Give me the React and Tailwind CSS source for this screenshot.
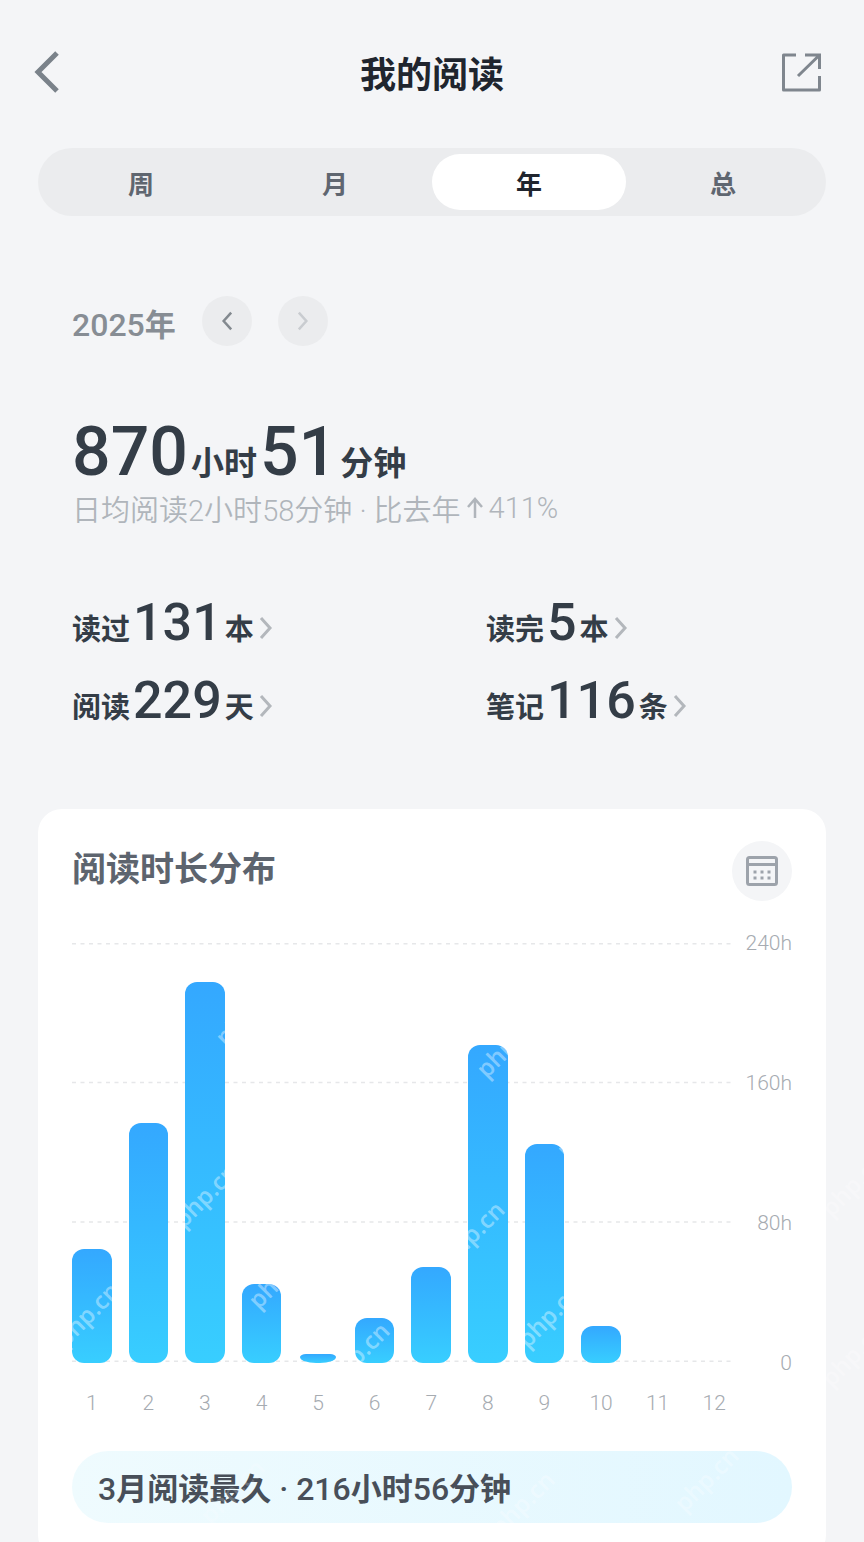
import { useState } from 'react';

const tabs = ['周', '月', '年', '总'];

const stats = [
  { label: '读过', value: 131, unit: '本' },
  { label: '读完', value: 5, unit: '本' },
  { label: '阅读', value: 229, unit: '天' },
  { label: '笔记', value: 116, unit: '条' },
];

const MAX_HOURS = 240;
const ticks = ['240h', '160h', '80h', '0'];

// marks: watermark centres, px from the bar's left and bottom edges
const months = [
  { month: 1, hours: 65, marks: [[15, 49]] },
  { month: 2, hours: 137, marks: [] },
  { month: 3, hours: 218, marks: [[20, 168], [62, 350]] },
  { month: 4, hours: 45, marks: [[38, 87]] },
  { month: 5, hours: 5, marks: [] },
  { month: 6, hours: 26, marks: [[2, 9]] },
  { month: 7, hours: 55, marks: [] },
  { month: 8, hours: 182, marks: [[40, 318], [4, 130]] },
  { month: 9, hours: 125, marks: [[24, 48], [63, 238]] },
  { month: 10, hours: 21, marks: [] },
  { month: 11, hours: 0, marks: [] },
  { month: 12, hours: 0, marks: [] },
];

function Chevron({ left = false, className }) {
  return (
    <svg viewBox="0 0 14 24" fill="none" stroke="currentColor" className={className} aria-hidden="true">
      <path d={left ? 'M12 2 3 12l9 10' : 'M2 2l9 10-9 10'} strokeWidth="3" />
    </svg>
  );
}

function Num({ children, className = '' }) {
  return <span className={`font-['Roboto',sans-serif] leading-none ${className}`}>{children}</span>;
}

function Watermark({ className, style }) {
  return (
    <span
      aria-hidden="true"
      style={style}
      className={`pointer-events-none absolute -translate-x-1/2 translate-y-1/2 -rotate-45 font-['Open_Sans',sans-serif] text-2xl leading-none font-semibold select-none ${className}`}
    >
      php.cn
    </span>
  );
}

function Header() {
  return (
    <header className="grid h-12 grid-cols-[1fr_auto_1fr] items-center px-8">
      <button type="button" aria-label="返回" className="justify-self-start text-[#7a828a]">
        <svg viewBox="0 0 30 44" fill="none" stroke="currentColor" className="h-11 w-[30px]" aria-hidden="true">
          <path d="M25 3 6 22l19 19" strokeWidth="5" />
        </svg>
      </button>
      <h1 className="text-4xl font-bold text-[#20252e]">我的阅读</h1>
      <button type="button" aria-label="分享" className="mr-2.5 justify-self-end text-[#7f868e]">
        <svg viewBox="0 0 40 40" fill="none" stroke="currentColor" strokeWidth="3" className="size-10" aria-hidden="true">
          <path d="M14 3H1.500v35h36V24" strokeLinejoin="round" />
          <path d="M23 3h14.500v14M36.500 4 16 24" />
        </svg>
      </button>
    </header>
  );
}

function Chart() {
  return (
    <div className="mt-[42px]">
      <div className="flex">
        <div className="relative h-[420px] flex-1">
          <svg className="absolute inset-0 h-full w-full" aria-hidden="true">
            {['0.2%', '33.2%', '66.4%', '99.6%'].map((y) => (
              <line key={y} x1="0" x2="100%" y1={y} y2={y} stroke="#e6e7e9" strokeWidth="1.500" strokeDasharray="4 4.500" />
            ))}
          </svg>
          <div className="relative grid h-full grid-cols-12 items-end gap-[17px]">
            {months.map(({ month, hours, marks }) => (
              <div
                key={month}
                style={{ height: `${(hours / MAX_HOURS) * 100}%` }}
                className={`relative overflow-hidden bg-linear-to-b from-[#34a8ff] to-[#38ceff] ${
                  month === 5 ? 'mx-0.5 rounded-t-[6px_3px] rounded-b-[16px_6px]' : 'rounded-xl'
                }`}
              >
                {marks.map(([left, bottom]) => (
                  <Watermark key={bottom} style={{ left, bottom }} className="text-white/40" />
                ))}
              </div>
            ))}
          </div>
        </div>
        <div className="-my-3 flex w-[58px] flex-col justify-between text-right font-['Roboto',sans-serif] text-[21px] leading-6 font-light text-[#a6abb1]">
          {ticks.map((tick) => (
            <span key={tick}>{tick}</span>
          ))}
        </div>
      </div>
      <div className="mt-7 mr-[58px] grid grid-cols-12 gap-[17px] text-center font-['Roboto',sans-serif] text-[21px] leading-6 font-light text-[#a6abb1]">
        {months.map(({ month }) => (
          <span key={month}>{month}</span>
        ))}
      </div>
    </div>
  );
}

export default function App() {
  const [active, setActive] = useState('年');

  return (
    <div className="relative min-h-screen overflow-hidden bg-[#f4f5f7] pt-12 font-['Noto_Sans_CJK_SC',sans-serif]">
      <Header />

      <main className="mt-13 px-[38px]">
        <nav className="grid grid-cols-4 rounded-full bg-[#ebecee] p-1.5">
          {tabs.map((tab) => (
            <button
              key={tab}
              type="button"
              aria-pressed={active === tab}
              onClick={() => setActive(tab)}
              className={`h-14 rounded-full text-[26px] font-bold ${
                active === tab ? 'bg-white text-[#20252e]' : 'text-[#5f6670]'
              }`}
            >
              {tab}
            </button>
          ))}
        </nav>

        <section className="mt-20 px-[34px]">
          <div className="flex items-center gap-[26px]">
            <h2 className="pt-1 text-[31px] leading-10 font-bold text-[#878d94]">
              <Num className="text-[32px] font-medium">2025</Num>年
            </h2>
            <button type="button" aria-label="上一年" className="flex size-[50px] items-center justify-center rounded-full bg-[#ebecee] text-[#83898f]">
              <Chevron left className="h-5 w-3" />
            </button>
            <button type="button" aria-label="下一年" disabled className="flex size-[50px] items-center justify-center rounded-full bg-[#ebecee] text-[#c9ccd0]">
              <Chevron className="h-5 w-3" />
            </button>
          </div>

          <p className="mt-[72px] flex items-baseline gap-[3px] text-[33px] leading-none font-bold text-[#343d47]">
            <Num className="text-[68px] font-medium">870</Num>
            <span>小时</span>
            <Num className="text-[68px] font-medium">51</Num>
            <span>分钟</span>
          </p>
          <p className="mt-0.5 flex items-center text-[29px] leading-10 font-[350] text-[#b0b5bb]">
            <span>
              日均阅读<Num className="font-light">2</Num>小时<Num className="font-light">58</Num>分钟
              <Num className="font-light"> · </Num>比去年
            </span>
            <svg viewBox="0 0 20 24" fill="none" stroke="currentColor" strokeWidth="2.500" className="mx-1 h-6 w-5" aria-hidden="true">
              <path d="M10 22V4M3 11l7-8 7 8" />
            </svg>
            <Num className="font-light">411%</Num>
          </p>

          <div className="mt-[69px] grid grid-cols-[23fr_17fr] gap-y-[26px]">
            {stats.map(({ label, value, unit }) => (
              <a key={label} href="#" className="flex items-baseline gap-[3px] text-[29px] leading-none font-bold text-[#343d47]">
                <span>{label}</span>
                <Num className="text-[52px] font-medium">{value}</Num>
                <span>{unit}</span>
                <Chevron className="ml-0.5 h-6 w-3.5 text-[#b3b7bc]" />
              </a>
            ))}
          </div>
        </section>

        <section className="mt-[82px] rounded-3xl bg-white px-[34px] pt-8 pb-9">
          <div className="flex items-start justify-between">
            <h2 className="text-[34px] leading-[52px] font-bold text-[#5d646e]">阅读时长分布</h2>
            <button type="button" aria-label="日历" className="flex size-15 items-center justify-center rounded-full bg-[#f4f5f7] text-[#9da3ab]">
              <svg viewBox="0 0 34 32" fill="none" stroke="currentColor" className="h-8 w-[34px]" aria-hidden="true">
                <rect x="2.500" y="2.500" width="29" height="27" rx="2" strokeWidth="3" />
                <path d="M2.500 9.500h29" strokeWidth="3" />
                <path d="M8.500 17h3M15.500 17h3M22.500 17h3M8.500 23h3M15.500 23h3M22.500 23h3" strokeWidth="3" />
              </svg>
            </button>
          </div>

          <Chart />

          <div className="relative mt-9 overflow-hidden rounded-full bg-linear-to-r from-[#effbfe] to-[#e2f7ff] px-[26px] py-4">
            <p className="text-[31px] leading-10 font-bold text-[#484f59]">
              <Num className="text-[32px] font-medium">3</Num>月阅读最久
              <Num className="text-[32px] font-medium"> · 216</Num>小时
              <Num className="text-[32px] font-medium">56</Num>分钟
            </p>
            <Watermark className="bottom-8 left-40 text-white/20" />
            <Watermark className="bottom-5 left-[450px] text-white/30" />
            <Watermark className="bottom-11 left-[634px] text-white/30" />
          </div>
        </section>
      </main>

      <Watermark className="top-[1160px] -right-17 text-white/30" />
      <Watermark className="top-[1330px] -right-17 text-white/30" />
    </div>
  );
}
